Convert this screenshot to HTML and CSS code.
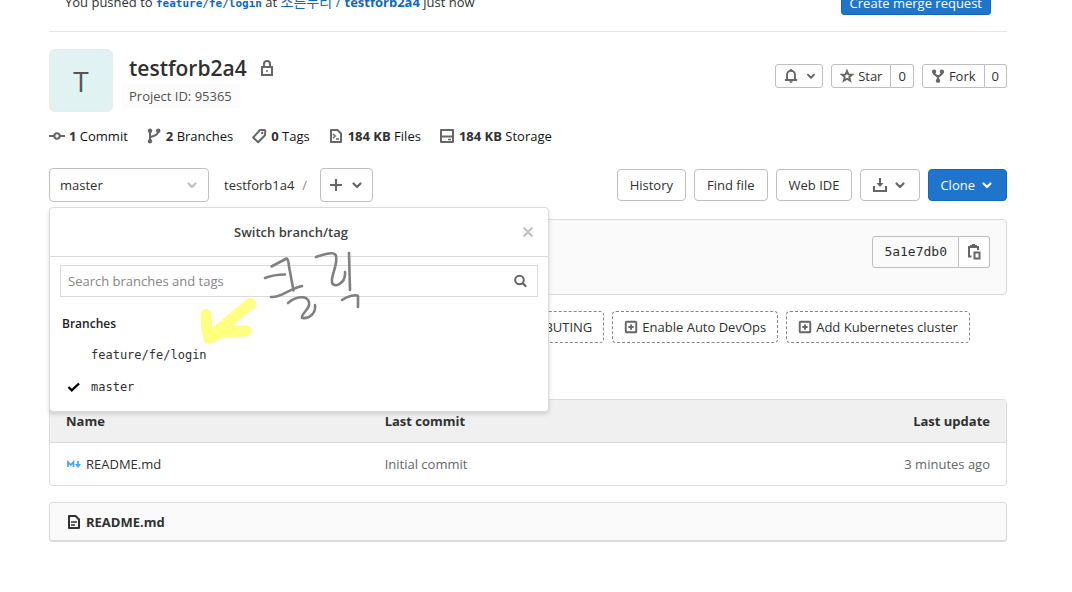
FILE: index.html
```html
<!DOCTYPE html>
<html lang="en">
<head>
<meta charset="utf-8">
<title>testforb2a4</title>
<link rel="stylesheet" href="styles.css">
</head>
<body>
<svg class="sprite" aria-hidden="true">
  <symbol id="chevron" viewBox="0 0 16 16"><path d="M4.500 6.500 8 10l3.500-3.500" fill="none" stroke="currentColor" stroke-width="2.200" stroke-linecap="round" stroke-linejoin="round"/></symbol>
  <symbol id="plus-square" viewBox="0 0 16 16"><rect x="2" y="2" width="12" height="12" rx="1" fill="none" stroke="currentColor" stroke-width="2.200"/><path d="M8 5v6M5 8h6" stroke="currentColor" stroke-width="2.200"/></symbol>
</svg>
<main class="page">
  <section class="notice">
    <p class="notice-text">You pushed to <a class="ref" href="#">feature/fe/login</a> at <a class="project" href="#">소른누리 / <b>testforb2a4</b></a> just now</p>
    <button class="btn primary small" type="button">Create merge request</button>
  </section>

  <header class="project-head">
    <div class="avatar">T</div>
    <div class="identity">
      <h1>testforb2a4
        <svg class="icon" viewBox="0 0 16 16" role="img" aria-label="Private"><path d="M3 7h10v8H3zM5 7V4a3 3 0 0 1 6 0v3" fill="none" stroke="currentColor" stroke-width="2"/><circle cx="8" cy="11" r="1" fill="currentColor"/></svg>
      </h1>
      <span class="project-id">Project ID: 95365</span>
    </div>
    <div class="social">
      <button class="btn small bell" type="button" aria-label="Notifications">
        <svg class="icon" viewBox="0 0 16 16"><path d="M3.500 12V6.500a4.500 4.500 0 0 1 9 0V12M1 12.500h14" fill="none" stroke="currentColor" stroke-width="2.200"/><path d="M6 14h4a2 2 0 0 1-4 0zM7 0h2v2H7z" fill="currentColor"/></svg>
        <svg class="icon"><use href="#chevron"/></svg>
      </button>
      <div class="group">
        <button class="btn small" type="button"><svg class="icon" viewBox="0 0 16 16"><path d="m8 2.300 1.600 3.900 4.200.3-3.200 2.700 1 4.200L8 11.200l-3.600 2.200 1-4.200-3.200-2.700 4.200-.3z" fill="none" stroke="currentColor" stroke-width="2.200"/></svg>Star</button>
        <a class="btn small count" href="#">0</a>
      </div>
      <div class="group">
        <button class="btn small" type="button"><svg class="icon" viewBox="0 0 16 16"><path d="M3.500 3v2.500L8 9l4.500-3.500V3M8 9v4" fill="none" stroke="currentColor" stroke-width="2.400"/><circle cx="3.500" cy="3" r="2.500" fill="currentColor"/><circle cx="12.500" cy="3" r="2.500" fill="currentColor"/><circle cx="8" cy="13.300" r="2.500" fill="currentColor"/></svg>Fork</button>
        <a class="btn small count" href="#">0</a>
      </div>
    </div>
  </header>

  <nav class="stats">
    <a href="#"><svg class="icon" viewBox="0 0 16 16"><path d="M0 8h5M11 8h5" stroke="currentColor" stroke-width="2"/><circle cx="8" cy="8" r="2.700" fill="none" stroke="currentColor" stroke-width="2"/></svg><span><b>1</b> Commit</span></a>
    <a href="#"><svg class="icon" viewBox="0 0 16 16"><path d="M4 3v10M4 10c0-2.500 8-1 8-6.500" fill="none" stroke="currentColor" stroke-width="2"/><circle cx="4" cy="2.800" r="2.200" fill="currentColor"/><circle cx="12.300" cy="2.800" r="2.200" fill="currentColor"/><circle cx="4" cy="13.200" r="2.200" fill="currentColor"/></svg><span><b>2</b> Branches</span></a>
    <a href="#"><svg class="icon" viewBox="0 0 16 16"><path d="M9 2h4.500l.8.800-.300 4.500-6.800 7-5-4.800z" fill="none" stroke="currentColor" stroke-width="2" stroke-linejoin="round"/><circle cx="11.200" cy="5" r="1.200" fill="currentColor"/></svg><span><b>0</b> Tags</span></a>
    <a href="#"><svg class="icon" viewBox="0 0 16 16"><path d="M3 2h6.500L13 5.500V14H3z" fill="none" stroke="currentColor" stroke-width="2" stroke-linejoin="round"/><path d="m5 6 2.200 2L5 10.200M8 11h3" fill="none" stroke="currentColor" stroke-width="1.500"/></svg><span><b>184 KB</b> Files</span></a>
    <a href="#"><svg class="icon" viewBox="0 0 16 16"><path d="M2 2h12v12H2zM2 8.500h12" fill="none" stroke="currentColor" stroke-width="2" stroke-linejoin="round"/><path d="M9 11.500h3" stroke="currentColor" stroke-width="1.500"/></svg><span><b>184 KB</b> Storage</span></a>
  </nav>

  <div class="tree-bar">
    <div class="branch">
      <button class="btn branch-toggle" type="button" aria-expanded="true" aria-haspopup="listbox">master<svg class="icon"><use href="#chevron"/></svg></button>
      <div class="menu">
        <div class="menu-head">
          <span class="menu-title">Switch branch/tag</span>
          <button class="plain" type="button" aria-label="Close"><svg class="icon" viewBox="0 0 16 16"><path d="m3.500 3.500 9 9m0-9-9 9" stroke="currentColor" stroke-width="2"/></svg></button>
        </div>
        <div class="search">
          <input type="text" placeholder="Search branches and tags" aria-label="Search branches and tags">
          <svg class="icon" viewBox="0 0 16 16"><circle cx="7.500" cy="7" r="4.300" fill="none" stroke="currentColor" stroke-width="2"/><path d="m11 10.500 2.500 2.500" stroke="currentColor" stroke-width="2.400" stroke-linecap="round"/></svg>
        </div>
        <h2 class="menu-label">Branches</h2>
        <ul class="refs">
          <li><a href="#">feature/fe/login</a></li>
          <li><a href="#"><svg class="check" viewBox="0 0 16 16"><path d="m2.500 8 3.300 3.300L13 4.500" fill="none" stroke="currentColor" stroke-width="2.400"/></svg>master</a></li>
        </ul>
        <svg class="scribble" viewBox="195 245 170 105" role="img" aria-label="클릭">
          <g fill="none" stroke-linecap="round" stroke-linejoin="round">
            <path d="M250.500 303.500 208.500 338M206 314.500 207 331 210 338 222 332 246 331" stroke="#ffff80" stroke-width="11"/>
            <path d="m208 337 14-5 24-1-20-3z" fill="#ffff80" stroke="#ffff80" stroke-width="8"/>
            <g stroke="#808080" stroke-width="2.600">
              <path d="m271.500 266.500 15-8q2 1 2.500 8l4.500 24M265 278q9-3.500 20-3.500M271 297c9 1 16-7 31-11"/>
              <path d="M288 303c8-7 19-8 21-1 2 7-8 11-7 16 8 1 14-5 13-13"/>
              <path d="M316 257c8-3 19-6 20-1 2 9-5 19-4 26 1 7 14 2 13-10M349 253l1 37M342 300c6-4 14-6 16-4v11"/>
            </g>
          </g>
        </svg>
      </div>
    </div>
    <div class="crumbs"><a href="#">testforb1a4</a><span>/</span></div>
    <button class="btn add" type="button" aria-label="Add to tree"><svg class="icon" viewBox="0 0 16 16"><path d="M8 2v12M2 8h12" stroke="currentColor" stroke-width="2"/></svg><svg class="icon"><use href="#chevron"/></svg></button>
    <div class="actions">
      <button class="btn wide" type="button">History</button>
      <button class="btn wide" type="button">Find file</button>
      <button class="btn wide" type="button">Web IDE</button>
      <button class="btn" type="button" aria-label="Download"><svg class="icon" viewBox="0 0 16 16"><path d="M2 9v5h12V9M8 1v7" fill="none" stroke="currentColor" stroke-width="2"/><path d="M4.500 6h7L8 10z" fill="currentColor"/></svg><svg class="icon"><use href="#chevron"/></svg></button>
      <button class="btn primary" type="button">Clone<svg class="icon"><use href="#chevron"/></svg></button>
    </div>
  </div>

  <section class="commit">
    <div class="group">
      <span class="btn sha">5a1e7db0</span>
      <button class="btn copy" type="button" aria-label="Copy commit SHA"><svg class="icon" viewBox="0 0 16 16"><path d="M5.500 12.500H3V3h9v3M5 3V2h5v1" fill="none" stroke="currentColor" stroke-width="2"/><path d="M6 0h3v3H6z" fill="currentColor"/><rect x="8.500" y="8.500" width="5" height="6" fill="none" stroke="currentColor" stroke-width="2"/></svg></button>
    </div>
  </section>

  <div class="suggestions">
    <a class="btn dashed" href="#"><svg class="icon"><use href="#plus-square"/></svg>Add CONTRIBUTING</a>
    <a class="btn dashed" href="#"><svg class="icon"><use href="#plus-square"/></svg>Enable Auto DevOps</a>
    <a class="btn dashed" href="#"><svg class="icon"><use href="#plus-square"/></svg>Add Kubernetes cluster</a>
  </div>

  <div class="files">
    <table>
      <thead><tr><th>Name</th><th>Last commit</th><th>Last update</th></tr></thead>
      <tbody><tr>
        <td><a class="file" href="#"><svg class="md" viewBox="0 0 16 16"><path d="M2 11V6l2.700 3L7.500 6v5M12 5v4" fill="none" stroke="currentColor" stroke-width="1.700"/><path d="M9 8h6l-3 4z" fill="currentColor"/></svg>README.md</a></td>
        <td>Initial commit</td>
        <td>3 minutes ago</td>
      </tr></tbody>
    </table>
  </div>

  <section class="readme">
    <svg class="icon" viewBox="0 0 16 16"><path d="M3 2h6.500L13 5.500V14H3z" fill="none" stroke="currentColor" stroke-width="2" stroke-linejoin="round"/><path d="M5 8h6M5 11h4" stroke="currentColor" stroke-width="1.500"/></svg>
    <a href="#">README.md</a>
  </section>
</main>
</body>
</html>
```

FILE: styles.css
```css
* { box-sizing: border-box; }

body {
  margin: 0;
  background: #fff;
  color: #303030;
  font: 13px/20px "Open Sans", "Noto Sans CJK KR", sans-serif;
  overflow: hidden;
}

a { color: inherit; text-decoration: none; }
button, input { font: inherit; color: inherit; }
b { font-weight: 700; }

.sprite { display: none; }
.icon { width: 16px; height: 16px; flex: none; color: #666; }

.page { padding: 0 65px 48px 49px; }

.notice {
  display: flex;
  align-items: center;
  justify-content: space-between;
  margin-top: -9px;
  padding: 0 16px 16px;
  border-bottom: 1px solid #e5e5e5;
}
.notice-text { margin: 0; }
.notice-text a { color: #1068bf; }
.notice-text .ref { font: 700 11px/20px "DejaVu Sans Mono", monospace; }
.notice-text .project { font-size: 14px; }
.project b { font-size: 13px; }

.btn {
  display: inline-flex;
  align-items: center;
  justify-content: center;
  gap: 4px;
  height: 32px;
  padding: 0 11px;
  border: 1px solid #bfbfbf;
  border-radius: 4px;
  background: #fff;
  white-space: nowrap;
}
.btn.wide { padding: 0 12px; }
.btn.small { height: 24px; padding: 0 8px; border-radius: 3px; }
.btn.count { padding: 0 7px; }
.btn.primary { background: #1f75cb; border-color: #1068bf; color: #fff; }
.btn.primary .icon { color: #fff; }
.btn.dashed { border: 1px dashed #868686; }
.btn.small .icon, .btn.dashed .icon { width: 14px; height: 14px; }

.group { display: flex; }
.group > .btn:first-child { border-radius: 3px 0 0 3px; }
.group > .btn:last-child { border-left: 0; border-radius: 0 3px 3px 0; }

.project-head { display: flex; align-items: flex-start; padding-top: 17px; height: 80px; }
.avatar {
  display: flex;
  align-items: center;
  justify-content: center;
  width: 64px;
  height: 63px;
  border: 1px solid #e3eeed;
  border-radius: 6px;
  background: #e0f2f1;
  color: #555;
  font-size: 28px;
}
.identity { padding: 4px 0 0 8px; }
.identity h1 {
  display: flex;
  align-items: center;
  gap: 12px;
  margin: 0 0 1px;
  padding-left: 8px;
  font-size: 21px;
  line-height: 30px;
  font-weight: 600;
}
.project-id {
  display: inline-block;
  padding: 2px 8px;
  border-radius: 4px;
  background: #fcfcfc;
  color: #525252;
}
.social { display: flex; gap: 8px; margin: 15px 0 0 auto; }
.btn.bell { gap: 6px; }
.bell .icon:last-child { margin-right: -4px; }

.stats { display: flex; gap: 18px; padding-top: 14px; color: #111; }
.stats a { display: flex; align-items: center; gap: 4px; }
.stats b { color: #303030; }

.tree-bar { display: flex; align-items: center; padding-top: 22px; }
.branch { position: relative; }
.branch-toggle { width: 160px; height: 34px; padding: 0 8px 0 10px; justify-content: space-between; }
.branch-toggle .icon { color: #bfbfbf; }
.crumbs { display: flex; gap: 8px; padding: 0 13px 0 15px; }
.crumbs span { color: #868686; }
.add { height: 34px; padding: 0 7px; gap: 5px; }
.actions { display: flex; gap: 8px; margin-left: auto; }

.menu {
  position: absolute;
  z-index: 2;
  top: 39px;
  left: 0;
  width: 500px;
  padding-bottom: 8px;
  border: 1px solid #dbdbdb;
  border-radius: 4px;
  background: #fff;
  box-shadow: 0 2px 4px rgba(0, 0, 0, 0.15);
}
.menu-head {
  display: flex;
  align-items: center;
  height: 49px;
  padding: 0 12px 0 0;
  border-bottom: 1px solid #dbdbdb;
}
.menu-title { flex: 1; padding-left: 12px; text-align: center; font-weight: 600; color: #404040; }
.plain { display: flex; padding: 0; border: 0; background: none; }
.plain .icon { color: #bfbfbf; }
.search { display: flex; align-items: center; margin: 8px 10px 0; padding-right: 9px; height: 32px; border: 1px solid #dbdbdb; }
.search input { flex: 1; height: 30px; padding: 0 7px; border: 0; outline: 0; background: none; }
.search input::placeholder { color: #868686; }
.menu-label { margin: 17px 12px 5px; font-size: 12px; line-height: 20px; font-weight: 600; color: #222; }
.refs { margin: 0; padding: 0; list-style: none; font: 12px/20px "DejaVu Sans Mono", monospace; }
.refs a { display: grid; grid-template-columns: 16px 1fr; align-items: center; column-gap: 9px; padding: 6px 16px; }
.refs a:not(:has(svg)) { padding-left: 41px; display: block; }
.check { width: 16px; height: 16px; color: #000; }
.scribble { position: absolute; top: 37px; left: 145px; width: 170px; height: 105px; pointer-events: none; }

.commit {
  display: flex;
  justify-content: flex-end;
  margin-top: 17px;
  padding: 16px 16px 26px;
  border: 1px solid #dbdbdb;
  border-radius: 4px;
  background: #fafafa;
}
.sha { background: #fafafa; font: 13px/20px "DejaVu Sans Mono", monospace; }
.copy { padding: 0 7px; }

.suggestions { display: flex; gap: 8px; padding: 16px 0 56px 391px; }

.files { border: 1px solid #dbdbdb; border-radius: 4px; overflow: hidden; }
table { width: 100%; border-collapse: collapse; table-layout: fixed; }
th, td { height: 42px; padding: 0 16px; text-align: left; }
th { background: #f0f0f0; border-bottom: 1px solid #dbdbdb; font-weight: 700; }
td { height: 43px; color: #666; }
th:last-child, td:last-child { text-align: right; }
.file { display: flex; align-items: center; gap: 4px; color: #303030; }
.md { width: 16px; height: 16px; color: #42a5f5; }

.readme {
  display: flex;
  align-items: center;
  gap: 4px;
  height: 40px;
  margin-top: 16px;
  padding: 0 16px;
  border: 1px solid #dbdbdb;
  border-bottom-width: 2px;
  border-radius: 4px;
  background: #fafafa;
  font-weight: 700;
}
.readme .icon { color: #303030; }
```
